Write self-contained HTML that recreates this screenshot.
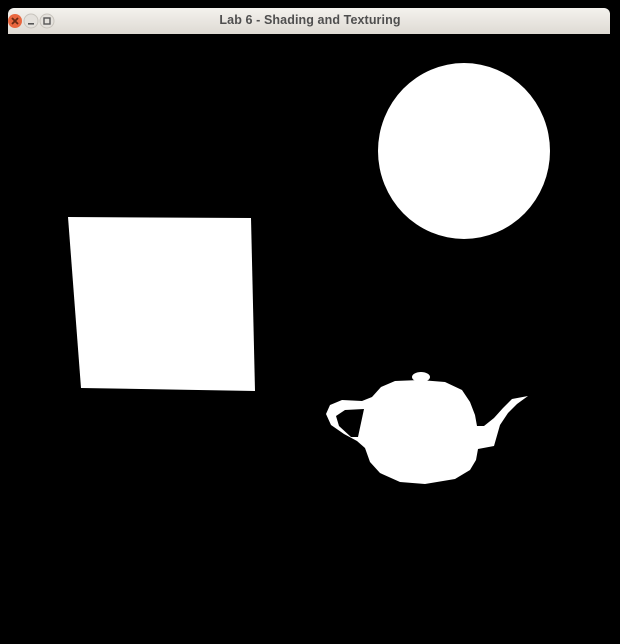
<!DOCTYPE html>
<html><head><meta charset="utf-8"><style>
html,body{margin:0;padding:0;background:#000;width:620px;height:644px;overflow:hidden;}
.tb{position:absolute;left:8px;top:8px;width:602px;height:26px;border-radius:6px 6px 0 0;background:linear-gradient(#f4f2ee,#dedad3);}
.t{position:absolute;left:0;width:620px;top:13px;text-align:center;font:bold 12.5px "Liberation Sans",sans-serif;color:#4f4f4f;letter-spacing:0.1px;}
svg{position:absolute;left:0;top:0;}
</style></head><body>
<div class="tb"></div>
<div class="t">Lab 6 - Shading and Texturing</div>
<svg width="620" height="644">
<circle cx="15" cy="21" r="7" fill="#e9673f"/>
<path d="M12 18l6 6M18 18l-6 6" stroke="#6a2a14" stroke-width="1.8"/>
<circle cx="31" cy="21" r="7" fill="#e4e1dc" stroke="#c8c4bd"/>
<rect x="28" y="23" width="6" height="1.6" fill="#555"/>
<circle cx="47" cy="21" r="7" fill="#e4e1dc" stroke="#c8c4bd"/>
<rect x="44" y="18" width="6" height="6" fill="none" stroke="#555" stroke-width="1.4"/>
<polygon points="68,217 251,218 255,391 81,388" fill="#fff"/>
<ellipse cx="464" cy="151" rx="86" ry="88" fill="#fff"/>
<ellipse cx="421" cy="377" rx="9" ry="5" fill="#fff"/>
<polygon points="381,387 395,381 420,380 445,382 462,390 470,402 475,415 477,426 484,426 494,418 503,408 512,399 528,396 517,404 508,413 500,425 494,446 478,449 476,460 470,470 455,479 425,484 400,482 380,473 370,462 365,448 357,441 344,434 331,425 326,414 330,405 342,400 362,401 372,397" fill="#fff"/>
<polygon points="345,410 364,409 358,437 351,437 339,426 336,416" fill="#000"/>
</svg>
</body></html>
